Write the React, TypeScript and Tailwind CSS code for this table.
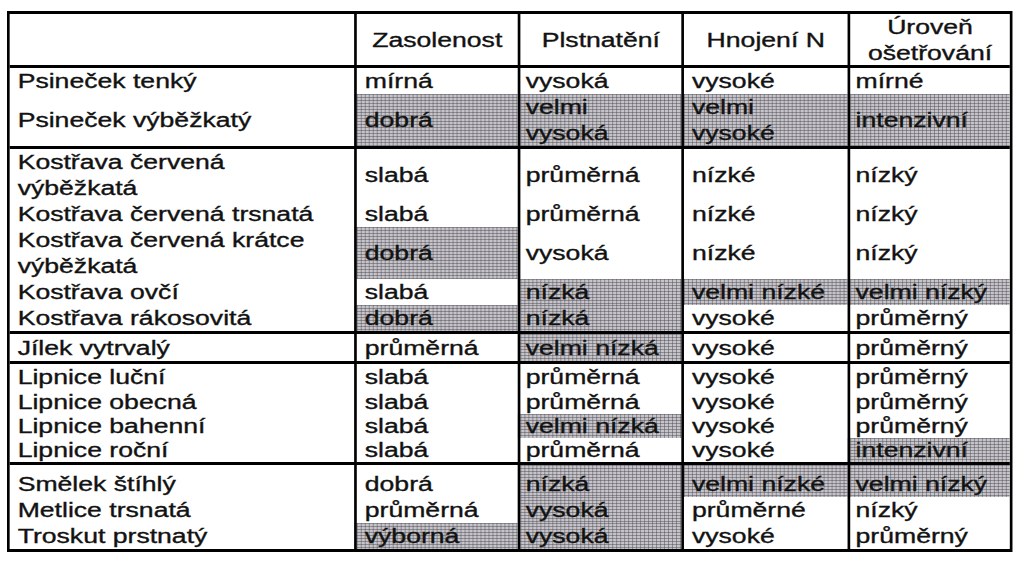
import React from "react";

type Row = {
  name: string[];
  cells: string[][];
  shade: number[];
  h: string;
  align?: string;
};

const SHADE =
  "bg-[#c6c4c8] bg-[image:linear-gradient(90deg,rgba(60,60,70,0.42)_1px,transparent_1px),linear-gradient(rgba(60,60,70,0.42)_1px,transparent_1px)] bg-[length:3px_3px]";

const PAD = ["pl-[6px]", "pl-[6px]", "pl-[4px]", "pl-[6px]", "pl-[4px]"];

const groups: Row[][] = [
  [
    { name: ["Psineček tenký"], cells: [["mírná"], ["vysoká"], ["vysoké"], ["mírné"]], shade: [0, 0, 0, 0], h: "h-[26px]" },
    {
      name: ["Psineček výběžkatý"],
      cells: [["dobrá"], ["velmi", "vysoká"], ["velmi", "vysoké"], ["intenzivní"]],
      shade: [1, 1, 1, 1],
      h: "h-[52px]",
    },
  ],
  [
    {
      name: ["Kostřava červená", "výběžkatá"],
      cells: [["slabá"], ["průměrná"], ["nízké"], ["nízký"]],
      shade: [0, 0, 0, 0],
      h: "h-[52px]",
    },
    { name: ["Kostřava červená trsnatá"], cells: [["slabá"], ["průměrná"], ["nízké"], ["nízký"]], shade: [0, 0, 0, 0], h: "h-[26px]" },
    {
      name: ["Kostřava červená krátce", "výběžkatá"],
      cells: [["dobrá"], ["vysoká"], ["nízké"], ["nízký"]],
      shade: [1, 0, 0, 0],
      h: "h-[52px]",
    },
    { name: ["Kostřava ovčí"], cells: [["slabá"], ["nízká"], ["velmi nízké"], ["velmi nízký"]], shade: [0, 1, 1, 1], h: "h-[26px]" },
    { name: ["Kostřava rákosovitá"], cells: [["dobrá"], ["nízká"], ["vysoké"], ["průměrný"]], shade: [1, 1, 0, 0], h: "h-[26px]" },
  ],
  [
    { name: ["Jílek vytrvalý"], cells: [["průměrná"], ["velmi nízká"], ["vysoké"], ["průměrný"]], shade: [0, 1, 0, 0], h: "h-[27px]" },
  ],
  [
    { name: ["Lipnice luční"], cells: [["slabá"], ["průměrná"], ["vysoké"], ["průměrný"]], shade: [0, 0, 0, 0], h: "h-[25px]" },
    { name: ["Lipnice obecná"], cells: [["slabá"], ["průměrná"], ["vysoké"], ["průměrný"]], shade: [0, 0, 0, 0], h: "h-[25px]" },
    { name: ["Lipnice bahenní"], cells: [["slabá"], ["velmi nízká"], ["vysoké"], ["průměrný"]], shade: [0, 1, 0, 0], h: "h-[24px]" },
    { name: ["Lipnice roční"], cells: [["slabá"], ["průměrná"], ["vysoké"], ["intenzivní"]], shade: [0, 0, 0, 1], h: "h-[24px]" },
  ],
  [
    {
      name: ["Smělek štíhlý"],
      cells: [["dobrá"], ["nízká"], ["velmi nízké"], ["velmi nízký"]],
      shade: [0, 1, 1, 1],
      h: "h-[32px]",
      align: "justify-end",
    },
    { name: ["Metlice trsnatá"], cells: [["průměrná"], ["vysoká"], ["průměrné"], ["nízký"]], shade: [0, 1, 0, 0], h: "h-[26px]" },
    { name: ["Troskut prstnatý"], cells: [["výborná"], ["vysoká"], ["vysoké"], ["průměrný"]], shade: [1, 1, 0, 0], h: "h-[26px]" },
  ],
];

function Cell({ lines, col, shade, align }: { lines: string[]; col: number; shade: boolean; align?: string }) {
  return (
    <div
      className={`${col > 0 ? "border-l-2 border-black" : ""} ${PAD[col]} ${shade ? SHADE : ""} flex flex-col ${
        align ?? "justify-center"
      }`}
    >
      {lines.map((l, i) => (
        <span key={i} className="block whitespace-nowrap">
          {l}
        </span>
      ))}
    </div>
  );
}

const GRID = "grid grid-cols-[259px_123px_123px_125px_1fr]";

export default function App() {
  return (
    <div className="w-[1024px] h-[563px] bg-white overflow-hidden">
      <div className="pt-[11px] pl-[7px]">
        <div className="w-[756px] origin-top-left scale-x-[1.33] border-x-2 border-y-[3px] border-black font-['Liberation_Sans',Arial,sans-serif] text-[20px] leading-[26px] text-[#121212] [-webkit-text-stroke:0.35px_#121212]">
          <div className={`${GRID} h-[51px]`}>
            <div />
            <div className="border-l-2 border-black flex items-center justify-center">Zasolenost</div>
            <div className="border-l-2 border-black flex items-center justify-center">Plstnatění</div>
            <div className="border-l-2 border-black flex items-center justify-center">Hnojení N</div>
            <div className="border-l-2 border-black flex flex-col items-center justify-center">
              <span>Úroveň</span>
              <span>ošetřování</span>
            </div>
          </div>
          {groups.map((g, gi) => (
            <div key={gi} className="border-t-[3px] border-black">
              {g.map((r, ri) => (
                <div key={ri} className={`${GRID} ${r.h} ${gi === 3 ? "leading-[24px]" : ""}`}>
                  <Cell lines={r.name} col={0} shade={false} align={r.align} />
                  {r.cells.map((c, ci) => (
                    <Cell key={ci} lines={c} col={ci + 1} shade={r.shade[ci] === 1} align={r.align} />
                  ))}
                </div>
              ))}
            </div>
          ))}
        </div>
      </div>
    </div>
  );
}
